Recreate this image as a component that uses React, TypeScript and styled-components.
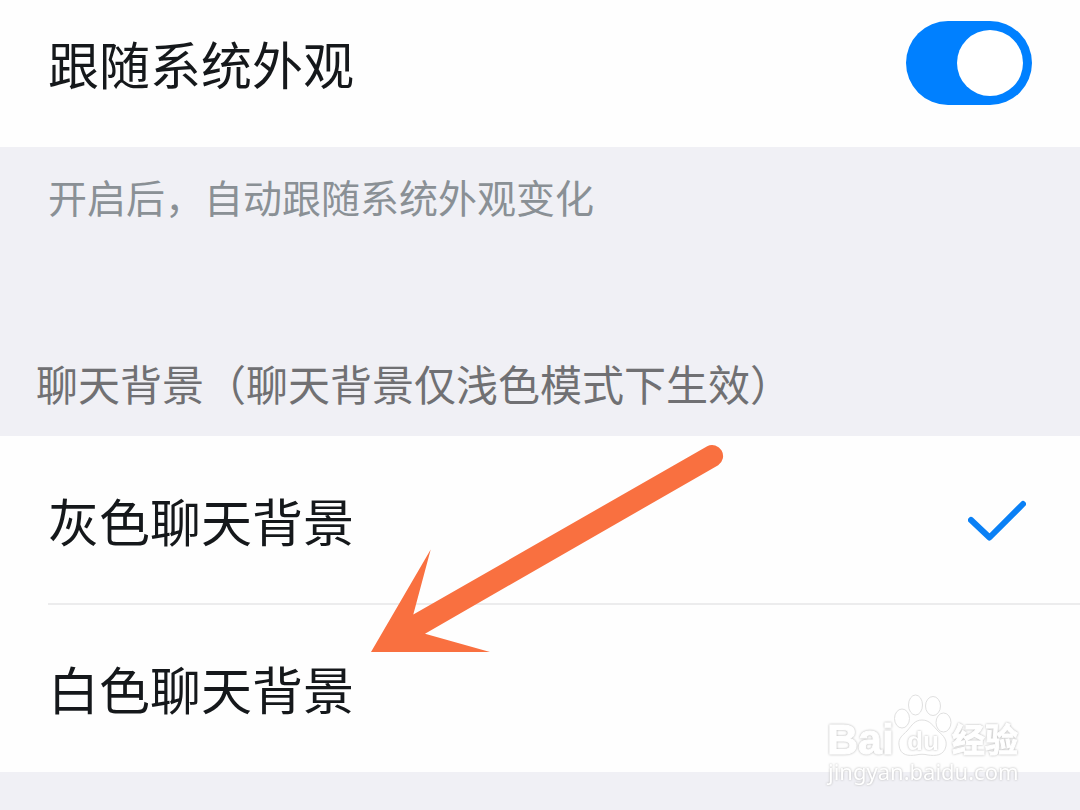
import React, { useState } from "react";
import styled, { createGlobalStyle } from "styled-components";

const GlobalStyle = createGlobalStyle`
  *, *::before, *::after { box-sizing: border-box; }
  body {
    margin: 0;
    background: #f0f0f5;
    font-family: "Noto Sans CJK SC", sans-serif;
  }
`;

const Page = styled.main`
  position: relative;
  min-height: 100vh;
  background: #f0f0f5;
  overflow: hidden;
`;

const SwitchRow = styled.label`
  display: flex;
  align-items: center;
  justify-content: space-between;
  padding: 21px 48px 42px;
  background: #fefefe;
  cursor: pointer;
`;

const RowTitle = styled.span`
  font-size: 51px;
  line-height: 84px;
  color: #15181b;
`;

const Switch = styled.input`
  appearance: none;
  flex: none;
  display: flex;
  align-items: center;
  width: 126px;
  height: 84px;
  margin: 0;
  padding: 0 9px;
  border-radius: 42px;
  background: #c9cbd0;
  cursor: pointer;

  &::before {
    content: "";
    width: 66px;
    height: 66px;
    border-radius: 50%;
    background: #fff;
  }

  &:checked {
    justify-content: flex-end;
    background: #0080ff;
  }
`;

const Hint = styled.p`
  margin: 0;
  padding: 20px 48px 0;
  font-size: 39px;
  line-height: 58px;
  color: #8a9095;
`;

const Group = styled.fieldset`
  margin: 0;
  padding: 0;
  border: 0;
  min-width: 0;
`;

const GroupTitle = styled.legend`
  padding: 129px 36px 24px;
  font-size: 42px;
  line-height: 58px;
  color: #707073;
`;

const Options = styled.div`
  position: relative;
  background: #fefefe;
`;

const Option = styled.label`
  display: flex;
  align-items: center;
  justify-content: space-between;
  height: 168px;
  margin-left: 48px;
  padding-right: 54px;
  cursor: pointer;

  & + & {
    box-shadow: 0 -1px #ececed, inset 0 1px #ececed;
  }
`;

const Radio = styled.input`
  appearance: none;
  width: 0;
  height: 0;
  margin: 0 0 0 auto;
`;

const Check = styled.svg`
  flex: none;
  width: 58px;
  height: 42px;
`;

const Arrow = styled.svg`
  position: absolute;
  left: 370px;
  top: 8px;
  width: 356px;
  height: 210px;
  pointer-events: none;
`;

const Watermark = styled.svg`
  position: absolute;
  right: 56px;
  bottom: 20px;
  width: 200px;
  height: 100px;
  pointer-events: none;

  text {
    fill: #fff;
    filter: drop-shadow(0 0 1px #b4b4b4);
  }

  .heavy {
    stroke: #fff;
    stroke-width: 1px;
  }

  path, ellipse {
    fill: #fff;
    stroke: #e0e0e0;
    stroke-width: 1px;
  }
`;

const options = [
  { id: "gray", label: "灰色聊天背景" },
  { id: "white", label: "白色聊天背景" },
];

export default function App() {
  const [follow, setFollow] = useState(true);
  const [background, setBackground] = useState("gray");

  return (
    <Page>
      <GlobalStyle />
      <SwitchRow>
        <RowTitle>跟随系统外观</RowTitle>
        <Switch
          type="checkbox"
          role="switch"
          checked={follow}
          onChange={(e) => setFollow(e.target.checked)}
        />
      </SwitchRow>
      <Hint>开启后，自动跟随系统外观变化</Hint>

      <Group>
        <GroupTitle>聊天背景（聊天背景仅浅色模式下生效）</GroupTitle>
        <Options>
          {options.map((o) => (
            <Option key={o.id}>
              <RowTitle>{o.label}</RowTitle>
              <Radio
                type="radio"
                name="background"
                checked={background === o.id}
                onChange={() => setBackground(o.id)}
              />
              {background === o.id && (
                <Check viewBox="0 0 58 42" aria-hidden="true">
                  <path
                    d="M3 21 L21.5 38.5 L55 5"
                    fill="none"
                    stroke="#0a80f5"
                    strokeWidth="6"
                    strokeLinecap="round"
                    strokeLinejoin="round"
                  />
                </Check>
              )}
            </Option>
          ))}
          <Arrow viewBox="370 444 356 210" aria-hidden="true">
            <path
              d="M371 652 L430.7 549.5 L413.3 614.5 L707.2 446.2 A11 11 0 0 1 718.2 465.2 L425 633.7 L490 652 Z"
              fill="#f97040"
            />
          </Arrow>
        </Options>
      </Group>

      <Watermark viewBox="824 690 200 100" aria-hidden="true">
        <text className="heavy" x="827" y="754" fontFamily="Liberation Sans, sans-serif" fontWeight="700" fontSize="43">
          Bai
        </text>
        <ellipse cx="902" cy="718.5" rx="7.5" ry="9.5" />
        <ellipse cx="915.5" cy="705" rx="7" ry="10" />
        <ellipse cx="933" cy="706" rx="7.5" ry="9.5" />
        <ellipse cx="943.5" cy="722.5" rx="7.5" ry="9.5" />
        <path d="M922 720 C930 720 933 726 938 731 C944 736 947 740 946 746 C944 756 935 756 928 755 C924 754 920 754 916 755 C909 756 900 756 899 745 C898 738 903 735 907 731 C912 725 915 720 922 720 Z" />
        <text x="907" y="750" fontFamily="Liberation Sans, sans-serif" fontWeight="700" fontSize="26">
          du
        </text>
        <text className="heavy" x="952" y="752" fontFamily="Noto Sans CJK SC, sans-serif" fontWeight="700" fontSize="33">
          经验
        </text>
        <text x="828" y="780" fontFamily="Noto Sans, sans-serif" fontSize="22">
          jingyan.baidu.com
        </text>
      </Watermark>
    </Page>
  );
}
